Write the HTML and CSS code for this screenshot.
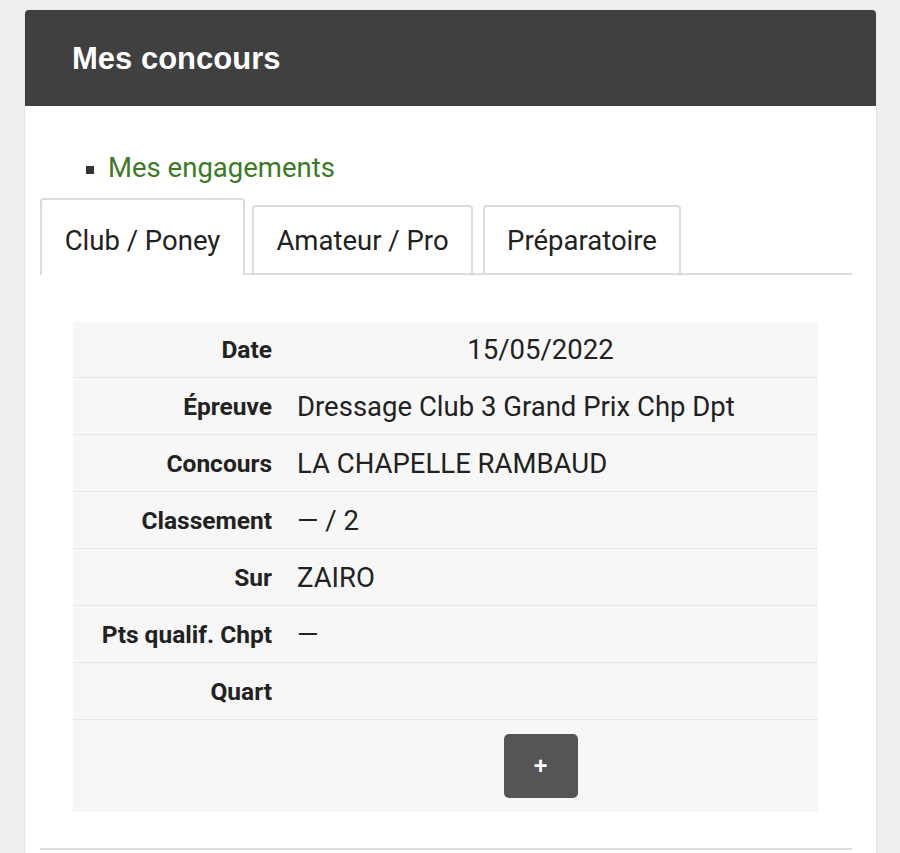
FILE: index.html
```html
<!DOCTYPE html>
<html lang="fr">
<head>
<meta charset="utf-8">
<link rel="stylesheet" href="styles.css">
</head>
<body>
<div class="card">
  <div class="card-header"><h1>Mes concours</h1></div>
  <div class="card-body">
    <ul class="links"><li><a href="#">Mes engagements</a></li></ul>
    <div class="tabs">
      <div class="tab active">Club / Poney</div>
      <div class="tab">Amateur / Pro</div>
      <div class="tab">Préparatoire</div>
    </div>
    <div class="pane">
      <div class="table">
        <div class="row"><div class="lbl">Date</div><div class="val center">15/05/2022</div></div>
        <div class="row"><div class="lbl">Épreuve</div><div class="val">Dressage Club 3 Grand Prix Chp Dpt</div></div>
        <div class="row"><div class="lbl">Concours</div><div class="val">LA CHAPELLE RAMBAUD</div></div>
        <div class="row"><div class="lbl">Classement</div><div class="val">— / 2</div></div>
        <div class="row"><div class="lbl">Sur</div><div class="val">ZAIRO</div></div>
        <div class="row"><div class="lbl">Pts qualif. Chpt</div><div class="val">—</div></div>
        <div class="row"><div class="lbl">Quart</div><div class="val"></div></div>
        <div class="row btn-row"><div class="lbl"></div><div class="val center"><button class="plus">+</button></div></div>
      </div>
    </div>
    <div class="bottom-line"></div>
  </div>
</div>
</body>
</html>
```

FILE: styles.css
```css
html, body {
  margin: 0;
  padding: 0;
}
body {
  background: #efefef;
  font-family: Roboto, "Liberation Sans", sans-serif;
  color: #222;
  height: 853px;
  overflow: hidden;
}
.card {
  margin: 10px 24px 0 25px;
  background: #fff;
  border-radius: 4px 4px 0 0;
  height: 860px;
  box-shadow: 0 0 2px rgba(0,0,0,0.12);
}
.card-header {
  background: #404040;
  height: 96px;
  border-radius: 4px 4px 0 0;
  display: flex;
  align-items: center;
  padding-left: 47px;
}
.card-header h1 {
  margin: 0;
  color: #fff;
  font-family: "Liberation Sans", Arial, sans-serif;
  font-weight: bold;
  font-size: 31px;
  padding-top: 1px;
}
.card-body {
  padding: 0 24px 0 15px;
}
.links {
  margin: 0;
  padding: 48px 0 0 68px;
  list-style: square;
  font-size: 27.5px;
  line-height: 28px;
  height: 44px;
}
.links li::marker {
  color: #333;
  font-size: 25px;
}
.links a {
  color: #3c7b26;
  text-decoration: none;
}
.tabs {
  display: flex;
  align-items: flex-end;
  border-bottom: 2px solid #dcdcdc;
  height: 73px;
  margin-top: 2px;
}
.tab {
  box-sizing: border-box;
  height: 68px;
  display: flex;
  align-items: center;
  justify-content: center;
  border: 2px solid #dcdcdc;
  border-bottom: none;
  border-radius: 4px 4px 0 0;
  font-size: 27.5px;
  color: #222;
}
.tab:nth-child(1) { width: 205px; margin-right: 7px; }
.tab:nth-child(2) { width: 221px; margin-right: 10px; }
.tab:nth-child(3) { width: 198px; }
.tab.active {
  height: 77px;
  background: #fff;
  margin-bottom: -2px;
  padding-top: 6px;
}
.pane {
  padding: 47px 34px 0 33px;
}
.table {
  background: #f7f7f7;
}
.row {
  display: grid;
  grid-template-columns: 212px 1fr;
  height: 57px;
  align-items: center;
  border-bottom: 1px solid #e6e6e6;
  box-sizing: border-box;
}
.row:first-child { height: 56px; }
.lbl {
  text-align: right;
  font-weight: bold;
  font-size: 24.5px;
  color: #222;
  padding-right: 13px;
}
.val {
  font-size: 27.5px;
  color: #222;
  padding-left: 12px;
}
.val.center {
  text-align: center;
  padding-left: 0;
  padding-right: 22px;
}
.btn-row {
  height: 92px;
  border-bottom: none;
}
.plus {
  width: 74px;
  height: 64px;
  background: #555;
  color: #fff;
  border: none;
  border-radius: 5px;
  font-family: "Liberation Sans", Arial, sans-serif;
  font-weight: bold;
  font-size: 24px;
  cursor: pointer;
}
.bottom-line {
  margin-top: 36px;
  border-top: 2px solid #dcdcdc;
}
```
